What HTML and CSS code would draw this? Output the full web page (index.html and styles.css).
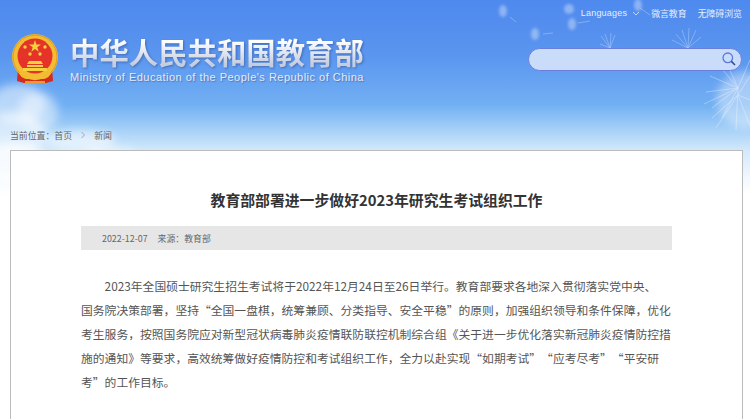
FILE: index.html
```html
<!DOCTYPE html>
<html lang="zh-CN">
  <head>
    <meta charset="UTF-8" />
    <title>教育部部署进一步做好2023年研究生考试组织工作</title>
    <link rel="stylesheet" href="styles.css">
  </head>
  <body>
    <div class="page">
      <!-- sky, clouds and dandelion behind the header -->
      <svg class="sky" width="750" height="200" viewBox="0 0 750 200">
        <defs>
          <filter id="soft"><feGaussianBlur stdDeviation="4" /></filter>
          <filter id="softer"><feGaussianBlur stdDeviation="1.5" /></filter>
          <filter id="hair"><feGaussianBlur stdDeviation="0.4" /></filter>
        </defs>
        <g fill="#fff" filter="url(#soft)">
          <ellipse cx="18" cy="104" rx="28" ry="20" opacity="0.5" />
          <ellipse cx="38" cy="112" rx="20" ry="20" opacity="0.45" />
          <ellipse cx="10" cy="135" rx="36" ry="22" opacity="0.55" />
          <ellipse cx="80" cy="140" rx="36" ry="10" opacity="0.55" />
          <ellipse cx="15" cy="165" rx="34" ry="20" opacity="0.7" />
          <ellipse cx="110" cy="152" rx="26" ry="4" opacity="0.5" />
        </g>
        <g fill="#fff" filter="url(#softer)" opacity="0.35">
          <ellipse cx="503" cy="11" rx="4" ry="6" />
          <ellipse cx="569" cy="9" rx="5" ry="5" />
          <ellipse cx="572" cy="24" rx="4" ry="6" />
          <ellipse cx="535" cy="34" rx="4" ry="6" />
          <ellipse cx="638" cy="5" rx="4" ry="6" />
        </g>
        <g stroke="#e8e4dc" stroke-width="0.7" fill="none" filter="url(#hair)">
          <path d="M510 17 516 22M578 23 590 21M543 34 553 33M640 8 650 15" opacity="0.5" />
          <path d="M610 48 632 55M688 48 708 70" opacity="0.8" />
        </g>
        <g stroke="#fff" stroke-width="0.6" fill="none" filter="url(#hair)" opacity="0.45">
          <path d="M610 48 601 36M610 48 605 34M610 48 611 33M610 48 615 35M610 48 600 44M610 48 599 52" />
          <path d="M688 48 672 40M688 48 676 34M688 48 682 30M688 48 689 28M688 48 696 30M688 48 701 37M688 48 671 50M688 48 674 56" />
        </g>
        <!-- dandelion head on the right edge -->
        <circle cx="745" cy="100" r="28" fill="#fff" opacity="0.4" filter="url(#soft)" />
        <g stroke="#fff" stroke-width="0.6" fill="none" filter="url(#hair)" opacity="0.55">
          <path d="M738 88 710 76M738 88 706 92M738 88 712 108M738 88 722 118M738 88 736 130M738 88 750 60M738 88 728 66M738 88 716 62M738 88 704 104" />
          <path d="M738 95 712 118M738 95 716 128M738 95 750 126M738 95 750 100M738 95 750 76" />
        </g>
      </svg>

      <nav class="topbar">
        <a class="lang">Languages<svg class="chevron" width="8" height="5" viewBox="0 0 8 5"><path d="M1 1 4 4 7 1" fill="none" stroke="#dbe8fb" stroke-width="0.8" /></svg></a>
        <a>微言教育</a>
        <a>无障碍浏览</a>
      </nav>

      <header class="header">
        <div class="brand">
          <svg class="emblem" width="46" height="50" viewBox="0 0 46 50">
            <path d="M6 34 5 47 12 49 34 49 41 47 40 34Z" fill="#d52a1c" />
            <path d="M4 23C4 36 12 42 23 42 34 42 42 36 42 23Z" fill="#f3bd33" />
            <circle cx="23" cy="23" r="23" fill="#f3bd33" />
            <circle cx="23" cy="23" r="22" fill="none" stroke="#e09a20" stroke-width="1" />
            <circle cx="23" cy="22" r="17.5" fill="#e5332a" />
            <path d="M23 6 24.4 10.6 29 10.6 25.3 13.3 26.7 17.8 23 15 19.3 17.8 20.7 13.3 17 10.6 21.6 10.6Z" fill="#f6d03f" />
            <g fill="#f6d03f">
              <circle cx="13" cy="13" r="1.7" />
              <circle cx="33" cy="13" r="1.7" />
              <circle cx="18" cy="20" r="1.7" />
              <circle cx="28" cy="20" r="1.7" />
              <path d="M17 27h12l2 3h-16zM15 31h16v2h-16zM11 34h24v3h-24z" />
            </g>
            <path d="M8 39C13 47 19 42 23 45 27 42 33 47 38 39" fill="none" stroke="#f3bd33" stroke-width="2.4" />
            <path d="M13 48h20" stroke="#f3bd33" stroke-width="1.6" />
          </svg>
          <div class="brand-text">
            <div class="brand-cn">中华人民共和国教育部</div>
            <div class="brand-en">Ministry of Education of the People's Republic of China</div>
          </div>
        </div>
        <div class="search">
          <svg width="14" height="14" viewBox="0 0 14 14">
            <circle cx="5.8" cy="5.8" r="4.8" fill="none" stroke="#5b78dc" stroke-width="1.3" />
            <path d="M9.4 9.4 13 13" stroke="#33478f" stroke-width="1.5" />
          </svg>
        </div>
      </header>

      <div class="crumbs">
        <span>当前位置：首页</span>
        <svg width="6" height="8" viewBox="0 0 6 8"><path d="M1.5 1 4.5 4 1.5 7" fill="none" stroke="#8a97a6" stroke-width="0.8" /></svg>
        <span>新闻</span>
      </div>

      <main class="card">
        <h1 class="title">教育部部署进一步做好2023年研究生考试组织工作</h1>
        <div class="meta">
          <span>2022-12-07</span>
          <span>来源：教育部</span>
        </div>
        <p class="content">2023年全国硕士研究生招生考试将于2022年12月24日至26日举行。教育部要求各地深入贯彻落实党中央、<br>国务院决策部署，坚持“全国一盘棋，统筹兼顾、分类指导、安全平稳”的原则，加强组织领导和条件保障，优化考生服务，按照国务院应对新型冠状病毒肺炎疫情联防联控机制综合组《关于进一步优化落实新冠肺炎疫情防控措施的通知》等要求，高效统筹做好疫情防控和考试组织工作，全力以赴实现“如期考试”“应考尽考”“平安研考”的工作目标。</p>
      </main>
    </div>
  </body>
</html>
```

FILE: styles.css
```css
* {
  box-sizing: border-box;
}

body {
  margin: 0;
  background-color: #fff;
  font-family: "Noto Sans CJK SC", "Liberation Sans", sans-serif;
  text-spacing-trim: space-all;
}

.page {
  position: relative;
  height: 419px;
  overflow: hidden;
  background: linear-gradient(#4e89ee 0, #5a95ef 55px, #72b0f3 105px, #a6d1f7 130px, #d2e8fb 150px, #f2f8fe 178px, #fff 195px);
}

.sky {
  position: absolute;
  top: 0;
  left: 0;
}

.topbar,
.header,
.crumbs,
.card {
  position: relative;
}

.topbar {
  display: flex;
  justify-content: flex-end;
  align-items: center;
  gap: 11px;
  height: 26px;
  padding-right: 8px;
  font-size: 8.9px;
  color: #e6effc;
}

.lang {
  display: flex;
  align-items: center;
  gap: 5px;
  font-family: "Liberation Sans", sans-serif;
  font-size: 9px;
  letter-spacing: 0.2px;
}

.header {
  display: flex;
  justify-content: space-between;
  align-items: center;
  height: 50px;
  margin-top: 8px;
  padding: 0 8px 0 12px;
}

.brand {
  display: flex;
  align-items: center;
  gap: 12px;
}

.brand-cn {
  font-size: 29.4px;
  line-height: 34px;
  font-weight: bold;
  white-space: nowrap;
  background: linear-gradient(#fff 20%, #c3cce0 90%);
  -webkit-background-clip: text;
  background-clip: text;
  color: transparent;
  filter: drop-shadow(1px 1px 1px rgba(50, 80, 140, 0.6));
}

.brand-en {
  margin-top: 3px;
  font-family: "Liberation Sans", sans-serif;
  font-size: 11px;
  line-height: 13px;
  letter-spacing: 0.48px;
  white-space: nowrap;
  color: #e4eaf6;
  text-shadow: 1px 1px 1px rgba(50, 80, 140, 0.5);
}

.search {
  display: flex;
  justify-content: flex-end;
  align-items: center;
  width: 214px;
  height: 23px;
  padding-right: 5px;
  border: 1px solid #6a7fdc;
  border-radius: 12px;
  background-color: #c9dcfa;
}

.crumbs {
  display: flex;
  align-items: center;
  gap: 8px;
  height: 12px;
  margin-top: 45px;
  padding-left: 10px;
  font-size: 8.9px;
  color: #666;
}

.card {
  height: 280px;
  margin: 9px 7px 0 10px;
  padding: 39px 70px 0 70px;
  border: 1px solid #bbb;
  background-color: #fff;
}

.title {
  margin: 0;
  font-size: 14.85px;
  line-height: 20px;
  font-weight: bold;
  text-align: center;
  color: #333;
}

.meta {
  display: flex;
  align-items: center;
  gap: 10px;
  height: 24px;
  margin-top: 16px;
  padding-left: 21px;
  background-color: #e6e6e6;
  font-size: 8.9px;
  color: #666;
}

.content {
  margin: 24px 0 0;
  font-size: 11.8px;
  line-height: 24px;
  text-indent: 2em;
  color: #555;
}
```
